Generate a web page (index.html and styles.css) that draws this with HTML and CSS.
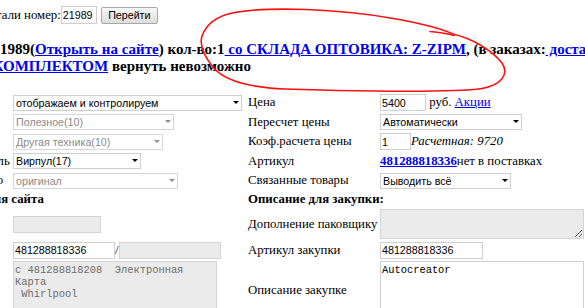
FILE: index.html
```html
<!DOCTYPE html>
<html lang="ru">
<head>
<meta charset="utf-8">
<title>Деталь 21989</title>
<link rel="stylesheet" href="styles.css">
</head>
<body>
<form class="goto">
  <span class="goto-label">Перейти к детали номер:</span><input class="field num" type="text" value="21989"><button class="btn" type="button">Перейти</button>
</form>

<h3 class="title">21989(<a href="#">Открыть на сайте</a>) кол-во:1<a href="#"> со СКЛАДА ОПТОВИКА: Z-ZIPM</a>, (в заказах:<a href="#"> доставлено 0</a>) Продается<br><a href="#">КОМПЛЕКТОМ</a> вернуть невозможно</h3>

<div class="form">
  <div class="lbl">Статус</div>
  <div class="ctl"><span class="sel w-status"><select><option>отображаем и контролируем</option></select></span></div>
  <div class="lbl">Цена</div>
  <div class="ctl"><input class="field w-price" type="text" value="5400"> руб. <a href="#">Акции</a></div>

  <div class="lbl">Категория</div>
  <div class="ctl"><span class="sel dis w-cat"><select disabled><option>Полезное(10)</option></select></span></div>
  <div class="lbl">Пересчет цены</div>
  <div class="ctl"><span class="sel w-recalc"><select><option>Автоматически</option></select></span></div>

  <div class="lbl">Раздел</div>
  <div class="ctl"><span class="sel dis w-sect"><select disabled><option>Другая техника(10)</option></select></span></div>
  <div class="lbl">Коэф.расчета цены</div>
  <div class="ctl"><input class="field w-coef" type="text" value="1"> <i>Расчетная: 9720</i></div>

  <div class="lbl">Производитель</div>
  <div class="ctl"><span class="sel w-brand"><select><option>Вирпул(17)</option></select></span></div>
  <div class="lbl">Артикул</div>
  <div class="ctl"><b><a href="#">481288818336</a></b>нет в поставках</div>

  <div class="lbl">Производство</div>
  <div class="ctl"><span class="sel dis w-orig"><select disabled><option>оригинал</option></select></span></div>
  <div class="lbl">Связанные товары</div>
  <div class="ctl"><span class="sel w-rel"><select><option>Выводить всё</option></select></span></div>

  <div class="head left">Описание для сайта</div>
  <div class="head right">Описание для закупки:</div>

  <div class="lbl">Название</div>
  <div class="ctl"><input class="field dis-field w-name" type="text" disabled></div>
  <div class="lbl">Дополнение паковщику</div>
  <div class="ctl"><textarea class="area dis-field w-area h-small" disabled></textarea></div>

  <div class="lbl">Артикул</div>
  <div class="ctl pair"><input class="field w-art" type="text" value="481288818336">/<input class="field dis-field w-art" type="text" disabled></div>
  <div class="lbl">Артикул закупки</div>
  <div class="ctl"><input class="field w-buyart" type="text" value="481288818336"></div>

  <div class="lbl">Описание</div>
  <div class="ctl top"><textarea class="area dis-field w-desc h-big" disabled>с 481288818208  Электронная
Карта
 Whirlpool</textarea></div>
  <div class="lbl">Описание закупке</div>
  <div class="ctl top"><textarea class="area w-area h-big">Autocreator</textarea></div>
</div>

<svg class="mark" width="585" height="308" viewBox="0 0 585 308" aria-hidden="true">
  <path d="M453 34 C470 38 491 49 502 63 C510 75 500 85 482 88.5 C450 93 340 91 285 89 C250 87.5 224 81 213 67 C204 56 199 46 202 36 C206 25 214 17 232 13 C268 6 340 9 390 18 C420 23 440 28 453 34" fill="none" stroke="#ff1010" stroke-width="1.6" stroke-linecap="round"/>
  <path d="M430 31.5 C440 32.5 447 33.5 454 35.5" fill="none" stroke="#ff1010" stroke-width="1.5" stroke-linecap="round"/>
</svg>
</body>
</html>
```
FILE: styles.css
```css
html, body {
  margin: 0;
  padding: 0;
  overflow: hidden;
  background: #fff;
}

body {
  position: relative;
  width: 585px;
  height: 308px;
  font-family: "Liberation Serif", "Times New Roman", serif;
  font-size: 12.8px;
  color: #000;
}

a {
  color: #0000ee;
}

/* top "go to" line */
.goto {
  display: flex;
  align-items: center;
  margin: 6px 0 0 -75px;
  height: 18px;
  white-space: nowrap;
}

.field {
  box-sizing: border-box;
  height: 17px;
  margin: 0;
  padding: 0 1px;
  border: 1px solid #cfcfcf;
  background: #fff;
  font-family: "Liberation Sans", Arial, sans-serif;
  font-size: 10.7px;
  color: #000;
  vertical-align: middle;
}

.num {
  width: 36px;
  height: 18px;
}

.btn {
  box-sizing: border-box;
  margin: 0 0 0 4px;
  width: 57px;
  height: 17px;
  padding: 0;
  border: 1px solid #a9a9a9;
  border-radius: 2px;
  background: linear-gradient(#f7f7f7, #dddddd);
  font-family: "Liberation Sans", Arial, sans-serif;
  font-size: 10.7px;
  color: #000;
}

/* heading */
.title {
  margin: 17px 0 0 -7.5px;
  font-size: 15px;
  line-height: 17.25px;
  font-weight: bold;
  white-space: nowrap;
}

/* form grid */
.form {
  display: grid;
  grid-template-columns: 86px 235px 132px 210px;
  grid-template-rows: repeat(5, 17px) auto 30px 17px 58px;
  row-gap: 2.5px;
  align-items: center;
  margin: 18.5px 0 0 -73px;
}

.lbl {
  white-space: nowrap;
}

.ctl {
  display: flex;
  align-items: center;
  white-space: pre;
  height: 100%;
}

.ctl.top {
  align-items: flex-start;
}

.head {
  font-weight: bold;
  white-space: nowrap;
}

.head.left {
  grid-column: 1 / 3;
}

.head.right {
  grid-column: 3 / 5;
}

/* selects */
.sel {
  position: relative;
  display: inline-block;
  height: 16px;
}

.sel select {
  appearance: none;
  -webkit-appearance: none;
  box-sizing: border-box;
  width: 100%;
  height: 16px;
  margin: 0;
  padding: 0 14px 0 2px;
  border: 1px solid #cfcfcf;
  border-radius: 0;
  background: #fff;
  font-family: "Liberation Sans", Arial, sans-serif;
  font-size: 10.7px;
  color: #000;
  opacity: 1;
}

.sel::after {
  content: "";
  position: absolute;
  right: 3px;
  top: 6px;
  border-left: 3px solid transparent;
  border-right: 3px solid transparent;
  border-top: 3.5px solid #000;
  pointer-events: none;
}

.sel.dis select {
  color: #8a8a8a;
  border-color: #d6d6d6;
}

.sel.dis::after {
  border-top-color: #8f8f8f;
}

.w-status { width: 229px; }
.w-cat { width: 161px; }
.w-sect { width: 150px; }
.w-brand { width: 128px; }
.w-orig { width: 165px; }
.w-recalc { width: 142px; }
.w-rel { width: 131px; }

.w-price { width: 46px; }
.w-coef { width: 31px; }
.w-name { width: 88px; }
.w-art { width: 102px; }
.w-buyart { width: 103px; }

.dis-field {
  background: #ebebeb;
  border-color: #d4d4d4;
  color: #6d6d6d;
}

.area {
  box-sizing: border-box;
  margin: 0;
  padding: 2px 1px;
  border: 1px solid #cfcfcf;
  font-family: "Liberation Mono", "Courier New", monospace;
  font-size: 10.4px;
  line-height: 12px;
  color: #000;
  background: #fff;
  white-space: pre-wrap;
}

.area.dis-field {
  background: #ebebeb;
  border-color: #d4d4d4;
  color: #6d6d6d;
}

.w-area { width: 204px; }
.w-desc { width: 204px; }
.h-small { height: 30px; }
.h-big { height: 58px; }

.mark {
  position: absolute;
  left: 0;
  top: 0;
  pointer-events: none;
}
```
